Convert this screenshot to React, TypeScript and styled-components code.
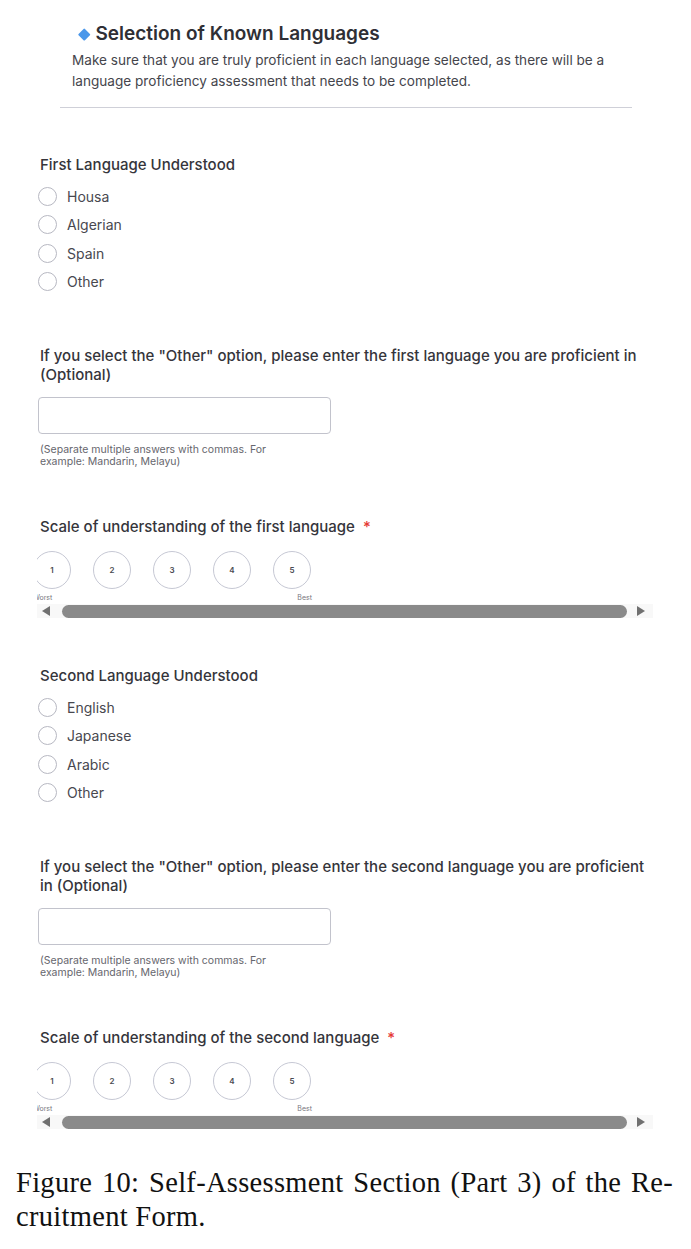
import React from "react";
import styled, { createGlobalStyle } from "styled-components";

const Global = createGlobalStyle`
  html, body { margin: 0; padding: 0; background: #ffffff; }
  body { font-family: Inter, "Noto Sans", "Liberation Sans", sans-serif; color: #333; }
  * { box-sizing: border-box; }
`;

const Page = styled.div`
  width: 691px;
  padding-top: 22px;
  padding-bottom: 20px;
`;

const Header = styled.header`
  margin-left: 60px;
  width: 572px;
  padding-bottom: 15px;
  border-bottom: 1.5px solid #cfd0d8;
`;

const TitleRow = styled.div`
  display: flex;
  align-items: center;
  gap: 7px;
  margin-left: 20px;
  height: 24px;
`;

const Diamond = styled.span`
  width: 8.5px;
  height: 8.5px;
  background: #4a97ea;
  transform: rotate(45deg);
  border-radius: 1px;
`;

const Title = styled.h1`
  margin: 0;
  font-size: 19px;
  font-weight: 600;
  color: #2f2f35;
  line-height: 24px;
`;

const Description = styled.p`
  margin: 4px 0 0 12px;
  max-width: 560px;
  font-size: 13.6px;
  line-height: 21px;
  color: #45454c;
`;

const Content = styled.main`
  padding-left: 40px;
  width: 652px;
`;

const Section = styled.section<{ $top: number }>`
  margin-top: ${(p) => p.$top}px;
`;

const Label = styled.h2`
  margin: 0;
  font-size: 15px;
  font-weight: 500;
  line-height: 20px;
  color: #35353b;
`;

const QuestionText = styled.h2`
  margin: 0;
  font-size: 15px;
  font-weight: 500;
  line-height: 19px;
  color: #35353b;
`;

const RadioList = styled.div`
  margin-top: 7px;
  margin-left: -2px;
  display: flex;
  flex-direction: column;
`;

const RadioRow = styled.label`
  height: 28.5px;
  display: flex;
  align-items: center;
  gap: 10px;
`;

const RadioCircle = styled.span`
  width: 19px;
  height: 19px;
  border-radius: 50%;
  border: 1.5px solid #b7b8c2;
  background: #fff;
`;

const RadioText = styled.span`
  font-size: 14px;
  color: #48484f;
`;

const TextInput = styled.div`
  margin-top: 13px;
  margin-left: -2px;
  width: 293px;
  height: 37px;
  border: 1.5px solid #c2c3cc;
  border-radius: 4px;
`;

const Hint = styled.p`
  margin: 10px 0 0 0;
  width: 260px;
  font-size: 10.5px;
  line-height: 12px;
  color: #66666d;
`;

const Asterisk = styled.span`
  color: #e53935;
  margin-left: 8px;
`;

const ScaleViewport = styled.div`
  margin-top: 14px;
  margin-left: -3px;
  width: 616px;
  overflow: hidden;
`;

const ScaleInner = styled.div`
  margin-left: -4px;
  width: 279px;
`;

const CircleRow = styled.div`
  display: flex;
  gap: 22px;
`;

const ScaleCircle = styled.span`
  width: 38px;
  height: 38px;
  border-radius: 50%;
  border: 1.5px solid #c6c8d4;
  display: flex;
  align-items: center;
  justify-content: center;
  font-size: 8px;
  font-weight: 600;
  color: #4a4a52;
`;

const EndLabels = styled.div`
  margin-top: 4px;
  display: flex;
  justify-content: space-between;
  font-size: 7px;
  line-height: 9px;
  color: #77777e;
`;

const ScrollTrack = styled.div`
  margin-top: 2px;
  height: 14px;
  display: flex;
  align-items: center;
  background: #f8f8f8;
  padding: 0 8px 0 5px;
`;

const ArrowLeft = styled.span`
  width: 0;
  height: 0;
  border-top: 5px solid transparent;
  border-bottom: 5px solid transparent;
  border-right: 8px solid #707070;
`;

const ArrowRight = styled.span`
  width: 0;
  height: 0;
  border-top: 5px solid transparent;
  border-bottom: 5px solid transparent;
  border-left: 8px solid #707070;
`;

const Thumb = styled.span`
  flex: 1;
  height: 13px;
  margin: 0 10px 0 12px;
  border-radius: 7px;
  background: #8a8a8a;
`;

const Caption = styled.figcaption`
  margin: 36.5px 0 0 16px;
  width: 657px;
  font-family: "Liberation Serif", "Times New Roman", serif;
  font-size: 28.5px;
  line-height: 34px;
  letter-spacing: 0.3px;
  color: #111;
`;

const CaptionLine = styled.div<{ $justify?: boolean }>`
  text-align: ${(p) => (p.$justify ? "justify" : "left")};
  text-align-last: ${(p) => (p.$justify ? "justify" : "left")};
`;

type LangBlockProps = {
  top: number;
  heading: string;
  options: string[];
  ordinal: string;
};

function LanguageBlock({ top, heading, options, ordinal }: LangBlockProps) {
  return (
    <>
      <Section $top={top}>
        <Label>{heading}</Label>
        <RadioList>
          {options.map((o) => (
            <RadioRow key={o}>
              <RadioCircle />
              <RadioText>{o}</RadioText>
            </RadioRow>
          ))}
        </RadioList>
      </Section>
      <Section $top={50}>
        <QuestionText>
          If you select the "Other" option, please enter the {ordinal} language you are proficient in (Optional)
        </QuestionText>
        <TextInput />
        <Hint>(Separate multiple answers with commas. For example: Mandarin, Melayu)</Hint>
      </Section>
      <Section $top={49}>
        <Label>
          Scale of understanding of the {ordinal} language<Asterisk>*</Asterisk>
        </Label>
        <ScaleViewport>
          <ScaleInner>
            <CircleRow>
              {[1, 2, 3, 4, 5].map((n) => (
                <ScaleCircle key={n}>{n}</ScaleCircle>
              ))}
            </CircleRow>
            <EndLabels>
              <span>Worst</span>
              <span>Best</span>
            </EndLabels>
          </ScaleInner>
          <ScrollTrack>
            <ArrowLeft />
            <Thumb />
            <ArrowRight />
          </ScrollTrack>
        </ScaleViewport>
      </Section>
    </>
  );
}

export default function App() {
  return (
    <Page>
      <Global />
      <Header>
        <TitleRow>
          <Diamond />
          <Title>Selection of Known Languages</Title>
        </TitleRow>
        <Description>
          Make sure that you are truly proficient in each language selected, as there will be a language
          proficiency assessment that needs to be completed.
        </Description>
      </Header>
      <Content>
        <LanguageBlock
          top={47}
          heading="First Language Understood"
          options={["Housa", "Algerian", "Spain", "Other"]}
          ordinal="first"
        />
        <LanguageBlock
          top={48}
          heading="Second Language Understood"
          options={["English", "Japanese", "Arabic", "Other"]}
          ordinal="second"
        />
      </Content>
      <Caption>
        <CaptionLine $justify>Figure 10: Self-Assessment Section (Part 3) of the Re-</CaptionLine>
        <CaptionLine>cruitment Form.</CaptionLine>
      </Caption>
    </Page>
  );
}
